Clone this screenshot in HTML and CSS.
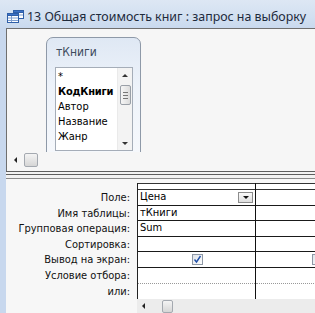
FILE: index.html
```html
<!DOCTYPE html>
<html lang="ru">
<head>
<meta charset="utf-8">
<link rel="stylesheet" href="styles.css">
</head>
<body>
<div class="window">
  <div class="titlebar">
    <svg class="ticon" width="17" height="13" viewBox="0 0 17 13">
      <rect x="6.5" y="0.5" width="10" height="8" fill="#fff" stroke="#2f5fa8"/>
      <rect x="6.5" y="0.5" width="10" height="2" fill="#3d73c8" stroke="#2f5fa8"/>
      <path d="M7 5h9M11.5 3v5" stroke="#7f9fd0"/>
      <rect x="0.5" y="3.5" width="11" height="9" fill="#fff" stroke="#2f5fa8"/>
      <rect x="0.5" y="3.5" width="11" height="2" fill="#3d73c8" stroke="#2f5fa8"/>
      <path d="M1 8h10M1 10.5h10M4.5 6v6" stroke="#7f9fd0"/>
    </svg>
    <span class="title">13 Общая стоимость книг : запрос на выборку</span>
  </div>
  <div class="frame">
    <div class="upper">
      <div class="canvas">
        <div class="tbox">
          <div class="tname">тКниги</div>
          <div class="list">
            <div class="items">
              <div class="item">*</div>
              <div class="item bold">КодКниги</div>
              <div class="item">Автор</div>
              <div class="item">Название</div>
              <div class="item">Жанр</div>
            </div>
            <div class="vscroll">
              <div class="arr up"></div>
              <div class="vthumb"><span></span><span></span><span></span></div>
              <div class="vtrack"></div>
              <div class="arr down"></div>
            </div>
          </div>
        </div>
      </div>
      <div class="hscroll">
        <div class="arr left"></div>
        <div class="hthumb"></div>
      </div>
    </div>
    <div class="splitter"><div class="splitline"></div></div>
    <div class="lower">
      <div class="labels">
        <div class="lbl">Поле:</div>
        <div class="lbl">Имя таблицы:</div>
        <div class="lbl">Групповая операция:</div>
        <div class="lbl">Сортировка:</div>
        <div class="lbl">Вывод на экран:</div>
        <div class="lbl">Условие отбора:</div>
        <div class="lbl">или:</div>
      </div>
      <div class="gridwrap">
        <div class="grid">
          <div class="col">
            <div class="colhead"></div>
            <div class="cell field">Цена<span class="dd"><span class="ddarr"></span></span></div>
            <div class="cell">тКниги</div>
            <div class="cell">Sum</div>
            <div class="cell"></div>
            <div class="cell center"><span class="chk checked">
              <svg width="9" height="9" viewBox="0 0 9 9"><path d="M1.5 4.5l2 2.5 4-6" fill="none" stroke="#1f4fa8" stroke-width="1.4"/></svg>
            </span></div>
            <div class="cell soft"></div>
            <div class="cell soft last"></div>
          </div>
          <div class="col second">
            <div class="colhead"></div>
            <div class="cell"></div>
            <div class="cell"></div>
            <div class="cell"></div>
            <div class="cell"></div>
            <div class="cell center"><span class="chk"></span></div>
            <div class="cell soft"></div>
            <div class="cell soft last"></div>
          </div>
        </div>
        <div class="gscroll">
          <div class="arr left"></div>
          <div class="gthumb"></div>
        </div>
      </div>
    </div>
  </div>
</div>
</body>
</html>
```

FILE: styles.css
```css
* { box-sizing: border-box; }
html, body { margin: 0; padding: 0; }
body { width: 315px; height: 313px; overflow: hidden; background: #fff; }

.window {
  width: 315px;
  height: 313px;
  overflow: hidden;
  display: flex;
  flex-direction: column;
  font-family: "DejaVu Sans Condensed", "Liberation Sans", Arial, sans-serif;
  font-size: 11px;
  color: #000;
}

.titlebar {
  height: 28px;
  flex: none;
  display: flex;
  align-items: flex-end;
  padding: 0 0 3px 7px;
  background: linear-gradient(#dde7f4, #d2e0f1 60%, #c9d9ee);
}
.ticon { flex: none; margin-bottom: 2px; }
.title {
  margin-left: 3px;
  font-family: "Noto Sans", sans-serif;
  font-size: 12.4px;
  color: #1e2a3c;
  white-space: nowrap;
  line-height: 16px;
}

.frame {
  flex: 1;
  display: flex;
  flex-direction: column;
  padding-left: 6px;
  background: #c8d8ee;
  min-height: 0;
}

.upper {
  height: 143px;
  flex: none;
  display: flex;
  flex-direction: column;
  border-top: 1px solid #6f6f6f;
  border-left: 1px solid #6f6f6f;
  background: #f6f6f6;
  padding-bottom: 4px;
}
.canvas {
  height: 123px;
  flex: none;
  overflow: hidden;
  padding: 8px 0 0 39px;
}
.tbox {
  width: 95px;
  height: 130px;
  border: 1px solid #8e99a8;
  border-radius: 7px;
  background: linear-gradient(#dfe8f4, #eef3fa 40%, #f7f9fc);
  padding: 7px 0 0 8px;
}
.tname {
  color: #3c4a5c;
  font-size: 12px;
  line-height: 14px;
  height: 22px;
  padding-left: 1px;
}
.list {
  width: 78px;
  height: 84px;
  border: 1px solid #a5adb8;
  background: #fff;
  display: flex;
}
.items { flex: 1; padding: 1px 0 0 2px; overflow: hidden; }
.item { height: 15px; line-height: 15px; white-space: nowrap; font-size: 11px; }
.item.bold { font-weight: bold; letter-spacing: -0.2px; }
.vscroll {
  width: 15px;
  flex: none;
  display: flex;
  flex-direction: column;
  align-items: center;
  background: #f3f3f3;
  border-left: 1px solid #eaeaea;
}
.arr { width: 0; height: 0; flex: none; }
.arr.up { margin-top: 6px; border-left: 3px solid transparent; border-right: 3px solid transparent; border-bottom: 3px solid #333; }
.arr.down { margin-bottom: 5px; border-left: 3px solid transparent; border-right: 3px solid transparent; border-top: 3px solid #333; }
.arr.left { border-top: 3px solid transparent; border-bottom: 3px solid transparent; border-right: 3px solid #222; }
.vthumb {
  margin-top: 8px;
  width: 11px;
  height: 20px;
  border: 1px solid #9aa0a8;
  border-radius: 2px;
  background: linear-gradient(90deg, #f6f6f6, #dcdcdc);
  display: flex;
  flex-direction: column;
  justify-content: center;
  align-items: center;
  gap: 2px;
}
.vthumb span { width: 5px; height: 1px; background: #777; }
.vtrack { flex: 1; }

.hscroll {
  height: 15px;
  flex: none;
  display: flex;
  align-items: center;
  padding-left: 7px;
  gap: 7px;
}
.hthumb {
  width: 14px;
  height: 14px;
  border: 1px solid #a4a9b0;
  border-radius: 2px;
  background: linear-gradient(#f4f4f4, #d6d6d6);
}

.splitter {
  height: 8px;
  flex: none;
  border-top: 1px solid #5e5e5e;
  border-bottom: 1px solid #8a8a8a;
  background: #f2f2f2;
  padding-top: 2px;
}
.splitline { height: 1px; background: #5e5e5e; }

.lower {
  flex: 1;
  display: flex;
  background: #f7f7f7;
  padding-top: 4px;
  min-height: 0;
  min-width: 0;
}
.labels {
  width: 131px;
  flex: none;
  padding-top: 7px;
  padding-right: 7px;
  text-align: right;
  color: #111;
}
.lbl { height: 15.6px; line-height: 15px; white-space: nowrap; }

.gridwrap {
  flex: 1;
  display: flex;
  flex-direction: column;
  min-width: 0;
  overflow: hidden;
}
.grid { display: flex; border-left: 1px solid #222; }
.col {
  width: 118px;
  flex: none;
  border-right: 1px solid #111;
}
.col.second { width: 120px; border-right: none; }
.colhead {
  height: 7px;
  border-top: 1px solid #333;
  border-bottom: 1px solid #333;
  background: #fff;
}
.cell {
  height: 15.6px;
  border-bottom: 1px solid #1a1a1a;
  background: #fff;
  line-height: 14px;
  padding-left: 2px;
  white-space: nowrap;
  display: flex;
  align-items: center;
}
.cell.soft { border-bottom: 1px dotted #999; }
.cell.last { border-bottom: none; }
.cell.center { justify-content: center; }
.cell.field { justify-content: space-between; padding-right: 2px; }
.dd {
  width: 15px;
  height: 11px;
  border: 1px solid #8c8c8c;
  background: linear-gradient(#fafafa, #dedede);
  display: flex;
  align-items: center;
  justify-content: center;
}
.ddarr { width: 0; height: 0; border-left: 3px solid transparent; border-right: 3px solid transparent; border-top: 3px solid #111; }
.chk {
  width: 11px;
  height: 11px;
  border: 1px solid #8e98a6;
  background: linear-gradient(135deg, #dfe4ea, #fdfdfd);
  display: flex;
  align-items: center;
  justify-content: center;
}

.gscroll {
  height: 14px;
  flex: none;
  display: flex;
  align-items: center;
  padding-left: 5px;
  gap: 17px;
  background: #ececec;
}
.gthumb {
  width: 11px;
  height: 13px;
  border: 1px solid #a4a9b0;
  border-radius: 2px;
  background: linear-gradient(#f4f4f4, #d6d6d6);
}
```
